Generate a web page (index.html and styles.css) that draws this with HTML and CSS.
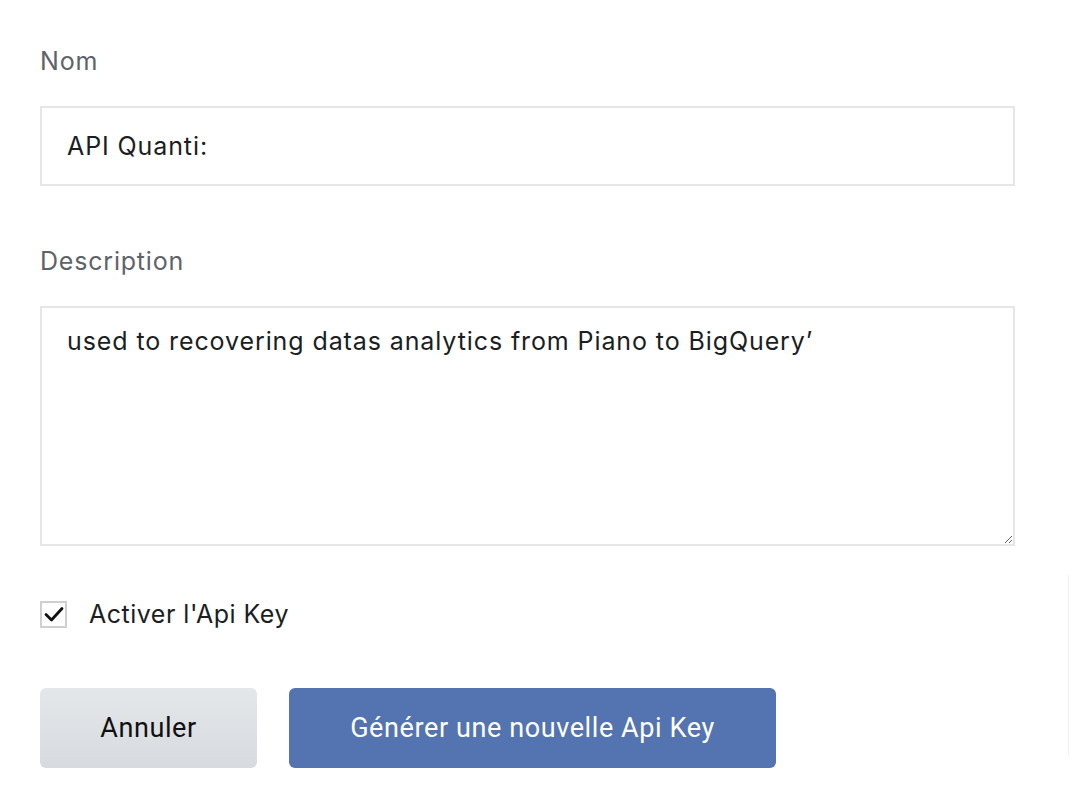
FILE: index.html
```html
<!DOCTYPE html>
<html lang="fr">
<head>
<meta charset="utf-8">
<link rel="stylesheet" href="styles.css">
</head>
<body>
<form class="form">
  <div class="field">
    <label class="label" for="nom">Nom</label>
    <input class="input" id="nom" type="text" value="API Quanti:">
  </div>
  <div class="field field-desc">
    <label class="label" for="desc">Description</label>
    <textarea class="textarea" id="desc">used to recovering datas analytics from Piano to BigQuery’</textarea>
  </div>
  <label class="check">
    <span class="box"><svg width="22" height="22" viewBox="0 0 22 22"><path d="M3 11.5 L8.5 17 L19 5.5" fill="none" stroke="#111" stroke-width="2.8" stroke-linecap="round" stroke-linejoin="round"/></svg></span>
    <span class="check-text">Activer l'Api Key</span>
  </label>
  <div class="actions">
    <button type="button" class="btn btn-cancel">Annuler</button>
    <button type="button" class="btn btn-primary">Générer une nouvelle Api Key</button>
  </div>
</form>
<div class="edge"></div>
</body>
</html>
```
FILE: styles.css
```css
* { box-sizing: border-box; }
html, body { margin: 0; background: #fff; }
body {
  font-family: Inter, "Noto Sans", sans-serif;
  color: #1b1e22;
  width: 1070px;
  height: 806px;
  overflow: hidden;
  position: relative;
}
.form {
  padding: 42px 0 0 40px;
  width: 1015px;
  display: flex;
  flex-direction: column;
}
.field { display: flex; flex-direction: column; }
.field-desc { margin-top: 56px; }
.label {
  font-size: 25px;
  letter-spacing: 0.8px;
  color: #5e6368;
  line-height: 38px;
  margin-bottom: 26px;
}
.input, .textarea {
  font-family: inherit;
  font-size: 25px;
  letter-spacing: 0.9px;
  color: #1b1e22;
  border: 2px solid #e6e6e6;
  border-radius: 0;
  background: #fff;
  outline: none;
  width: 975px;
  padding: 0 25px;
}
.input { height: 80px; }
.textarea {
  height: 240px;
  padding-top: 16px;
  line-height: 34px;
  resize: vertical;
}
.check {
  margin-top: 54px;
  display: flex;
  align-items: center;
  gap: 22px;
  font-size: 25px;
  letter-spacing: 0.5px;
  height: 28px;
}
.box {
  width: 27px;
  height: 27px;
  border: 2px solid #cfcfcf;
  display: flex;
  align-items: center;
  justify-content: center;
}
.actions {
  margin-top: 60px;
  display: flex;
  gap: 32px;
}
.btn {
  height: 80px;
  border: none;
  border-radius: 6px;
  font-family: Roboto, "Liberation Sans", sans-serif;
  font-size: 27px;
  letter-spacing: 0.6px;
  cursor: pointer;
}
.btn-cancel {
  width: 217px;
  background: linear-gradient(#e4e7ea, #d7dbdf);
  color: #111;
}
.btn-primary {
  width: 487px;
  background: #5374b0;
  color: #fff;
}
.edge {
  position: absolute;
  right: 1px;
  top: 575px;
  width: 1px;
  height: 180px;
  background: #f2f2f2;
}
```
